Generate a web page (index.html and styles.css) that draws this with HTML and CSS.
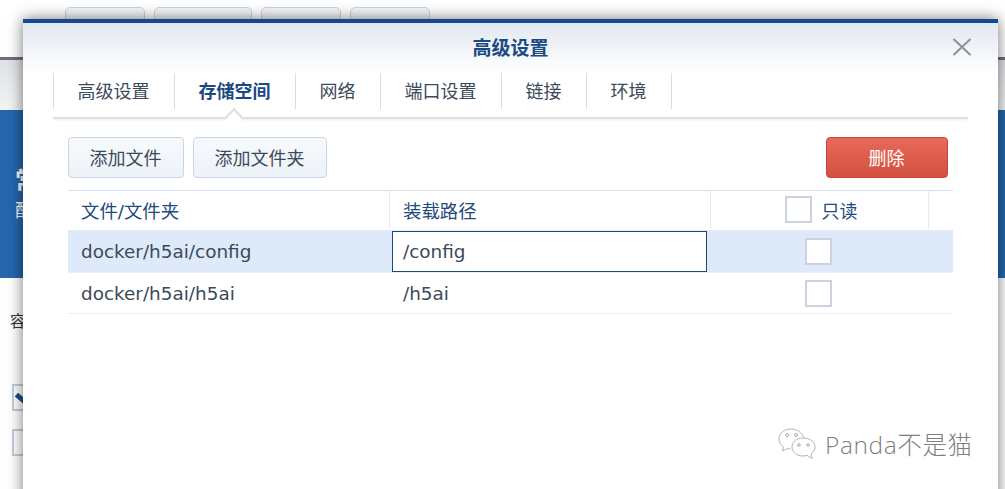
FILE: index.html
```html
<!DOCTYPE html>
<html>

<head>
    <title>高级设置</title>
    <meta charset="UTF-8">
    <meta name="viewport" content="width=device-width, initial-scale=1.0">
    <link rel="stylesheet" href="styles.css">
</head>

<body>
    <div class="backdrop">
        <div class="back-top">
            <div class="back-tabs">
                <span class="back-tab tab-a"></span>
                <span class="back-tab tab-b"></span>
                <span class="back-tab tab-a"></span>
                <span class="back-tab tab-a"></span>
            </div>
        </div>
        <div class="back-line"></div>
        <div class="back-band">
            <div class="back-band-title">常</div>
            <div class="back-band-sub">配</div>
        </div>
        <div class="back-form">
            <div class="back-label">容</div>
            <div class="back-check checked"><span class="back-tick"></span></div>
            <div class="back-check"></div>
        </div>
    </div>

    <div class="dialog">
        <div class="dialog-head">
            <h1>高级设置</h1>
            <svg class="close" width="20" height="18" viewBox="0 0 20 18">
                <path d="M1.5 1 L18.5 17 M18.5 1 L1.5 17" stroke="#8a9299" stroke-width="2" fill="none" />
            </svg>
        </div>
        <div class="tabs">
            <a class="tab tab-1">高级设置</a>
            <a class="tab tab-2 active">存储空间</a>
            <a class="tab tab-3">网络</a>
            <a class="tab tab-4">端口设置</a>
            <a class="tab tab-3">链接</a>
            <a class="tab tab-3 tab-last">环境</a>
        </div>
        <div class="toolbar">
            <button type="button" class="btn btn-file">添加文件</button>
            <button type="button" class="btn btn-folder">添加文件夹</button>
            <button type="button" class="btn btn-delete">删除</button>
        </div>
        <div class="grid">
            <div class="row head">
                <div class="cell col-1">文件/文件夹</div>
                <div class="cell col-2">装载路径</div>
                <div class="cell col-3"><span class="check"></span><span>只读</span></div>
                <div class="cell col-4"></div>
            </div>
            <div class="row selected">
                <div class="cell col-1">docker/h5ai/config</div>
                <div class="cell col-2"><div class="edit">/config</div></div>
                <div class="cell col-3"><span class="check"></span></div>
            </div>
            <div class="row last">
                <div class="cell col-1">docker/h5ai/h5ai</div>
                <div class="cell col-2">/h5ai</div>
                <div class="cell col-3"><span class="check"></span></div>
            </div>
        </div>
        <div class="watermark">
            <svg width="38" height="34" viewBox="0 0 38 34">
                <path d="M13 2 C6 2 1 6.500 1 12 C1 15.500 3 18 5.500 20 L4.500 24 L9.500 21.500 C10.500 21.800 11.500 22 12.500 22" stroke="#b5b5b5" fill="#fff" />
                <path d="M13 2 C19 2 24 5.500 25.500 10.500" stroke="#b5b5b5" fill="none" />
                <path d="M25 11 C18.500 11 14 15 14 20 C14 25 18.500 29 25 29 C26.500 29 27.500 28.800 29 28.300 L34 31.500 L33 27 C35.500 25 37 22.800 37 20 C37 15 32 11 25 11 Z" stroke="#b5b5b5" fill="#fff" />
                <circle cx="9" cy="8" r="1.500" stroke="#aaa" fill="none" />
                <circle cx="18" cy="8" r="1.500" stroke="#aaa" fill="none" />
                <circle cx="21" cy="18" r="1.300" stroke="#aaa" fill="none" />
                <circle cx="30" cy="18" r="1.300" stroke="#aaa" fill="none" />
            </svg>
            <span>Panda不是猫</span>
        </div>
    </div>
</body>

</html>
```

FILE: styles.css
```css
* {
    margin: 0;
    padding: 0;
    box-sizing: border-box;
}

html,
body {
    height: 489px;
    overflow: hidden;
}

body {
    font-family: "DejaVu Sans", "Noto Sans CJK SC", sans-serif;
    background-color: #fff;
    color: #3b4a5a;
}

/* the window behind the dialog */
.backdrop {
    height: 489px;
    display: flex;
    flex-direction: column;
}

.back-top {
    height: 57px;
    padding: 7px 0 0 65px;
}

.back-tabs {
    display: flex;
    gap: 9px;
}

.back-tab {
    height: 40px;
    border: 1px solid #c9d5e3;
    border-radius: 5px;
    background-color: #f3f6fa;
}

.tab-a {
    width: 80px;
}

.tab-b {
    width: 98px;
}

.back-line {
    height: 53px;
    border-top: 3px solid #6d7178;
    background: linear-gradient(#dfe2e6, #f3f4f6);
}

.back-band {
    height: 168px;
    background-color: #2566ad;
    color: #fff;
    padding: 55px 0 0 15px;
    font-size: 24px;
    line-height: 32px;
    font-weight: bold;
}

.back-band-sub {
    font-size: 18px;
    line-height: 28px;
    font-weight: normal;
}

.back-form {
    flex: 1;
    padding: 32px 0 0 10px;
    font-size: 16px;
    color: #333;
}

.back-label {
    height: 43px;
    line-height: 24px;
}

.back-check {
    width: 26px;
    height: 27px;
    margin: 31px 0 18px 2px;
    border: 2px solid #c4cedb;
    background-color: #fff;
    overflow: hidden;
}

.back-check + .back-check {
    margin-top: 0;
}

.back-tick {
    display: block;
    width: 12px;
    height: 5px;
    margin: 10px 0 0 1px;
    background-color: #1a4e8c;
    transform: rotate(40deg);
}

/* the dialog */
.dialog {
    position: absolute;
    left: 23px;
    top: 19px;
    width: 975px;
    height: 490px;
    background-color: #fff;
    border-top: 4px solid #154a8a;
    box-shadow: 0 0 14px rgba(0, 0, 0, 0.55);
}

.dialog-head {
    height: 50px;
    background: linear-gradient(#e2e8f1, #ffffff);
    display: flex;
    align-items: center;
    justify-content: center;
}

.dialog-head h1 {
    font-size: 19px;
    font-weight: bold;
    line-height: 26px;
    color: #1b4a82;
}

.close {
    position: absolute;
    left: 929px;
    top: 15px;
}

.tabs {
    height: 46px;
    margin: 0 30px;
    display: flex;
    align-items: flex-start;
    border-bottom: 2px solid #dcdfe3;
    box-shadow: 0 2px 2px -1px rgba(0, 0, 0, 0.08);
    position: relative;
}

.tab {
    height: 36px;
    line-height: 37px;
    text-align: center;
    font-size: 18px;
    padding-right: 1px;
    border-left: 1px solid #d5dde6;
    color: #3b4a5a;
}

.tab-1,
.tab-2 {
    width: 121px;
}

.tab-3 {
    width: 85px;
}

.tab-4 {
    width: 121px;
}

.tab-last {
    width: 86px;
    border-right: 1px solid #d5dde6;
}

.active {
    font-weight: bold;
    color: #1b4a82;
}

.active::after {
    content: "";
    position: absolute;
    left: 174px;
    top: 38px;
    width: 12px;
    height: 12px;
    background-color: #fff;
    border-left: 2px solid #dcdfe3;
    border-top: 2px solid #dcdfe3;
    transform: rotate(45deg);
}

.toolbar {
    display: flex;
    gap: 9px;
    margin: 18px 50px 0 45px;
}

.btn {
    height: 41px;
    padding: 0 1px 2px 0;
    border: 1px solid #c9d5e3;
    border-radius: 4px;
    background: linear-gradient(#f7fafd, #edf2f8);
    color: #3b4a5a;
    font-family: inherit;
    font-size: 18px;
}

.btn-file {
    width: 116px;
}

.btn-folder {
    width: 134px;
}

.btn-delete {
    width: 122px;
    margin-left: auto;
    border-color: #c8443a;
    background: linear-gradient(#e86a5c, #d2503f);
    color: #fff;
}

.grid {
    margin: 12px 45px 0;
    font-size: 18.4px;
    border-top: 1px solid #d8e2ee;
}

.row {
    display: flex;
    height: 41px;
    border-bottom: 1px solid #eceff3;
}

.row.head {
    height: 40px;
    padding-bottom: 2px;
    color: #1f4a7d;
    border-bottom-color: #e3e9f1;
}

.row.selected {
    height: 42px;
    background-color: #deeafa;
}

.row.last .col-1,
.row.last .col-2 {
    padding-top: 1px;
}

.cell {
    display: flex;
    align-items: center;
    padding-left: 13px;
}

.col-1 {
    width: 322px;
}

.col-2 {
    width: 321px;
}

.col-3 {
    width: 218px;
    justify-content: center;
    padding: 0 3px 0 0;
}

.col-4 {
    flex: 1;
}

.head .cell {
    border-right: 1px solid #e3e9f1;
}

.head .col-3 {
    padding: 0 0 0 3px;
    gap: 10px;
    font-size: 18px;
}

.head .col-4 {
    border-right: 0;
}

.selected .col-2 {
    padding-left: 2px;
}

.edit {
    width: 315px;
    height: 41px;
    line-height: 39px;
    padding-left: 10px;
    border: 1px solid #1b4a82;
    background-color: #fff;
}

.check {
    width: 27px;
    height: 27px;
    border: 2px solid #c9d2de;
    background-color: #fff;
}

.watermark {
    position: absolute;
    left: 755px;
    top: 403px;
    display: flex;
    align-items: center;
    gap: 9px;
    font-family: "Open Sans", "Noto Sans CJK SC", sans-serif;
    font-size: 24.5px;
    font-weight: 300;
    letter-spacing: 0.6px;
    color: #808080;
}
```
